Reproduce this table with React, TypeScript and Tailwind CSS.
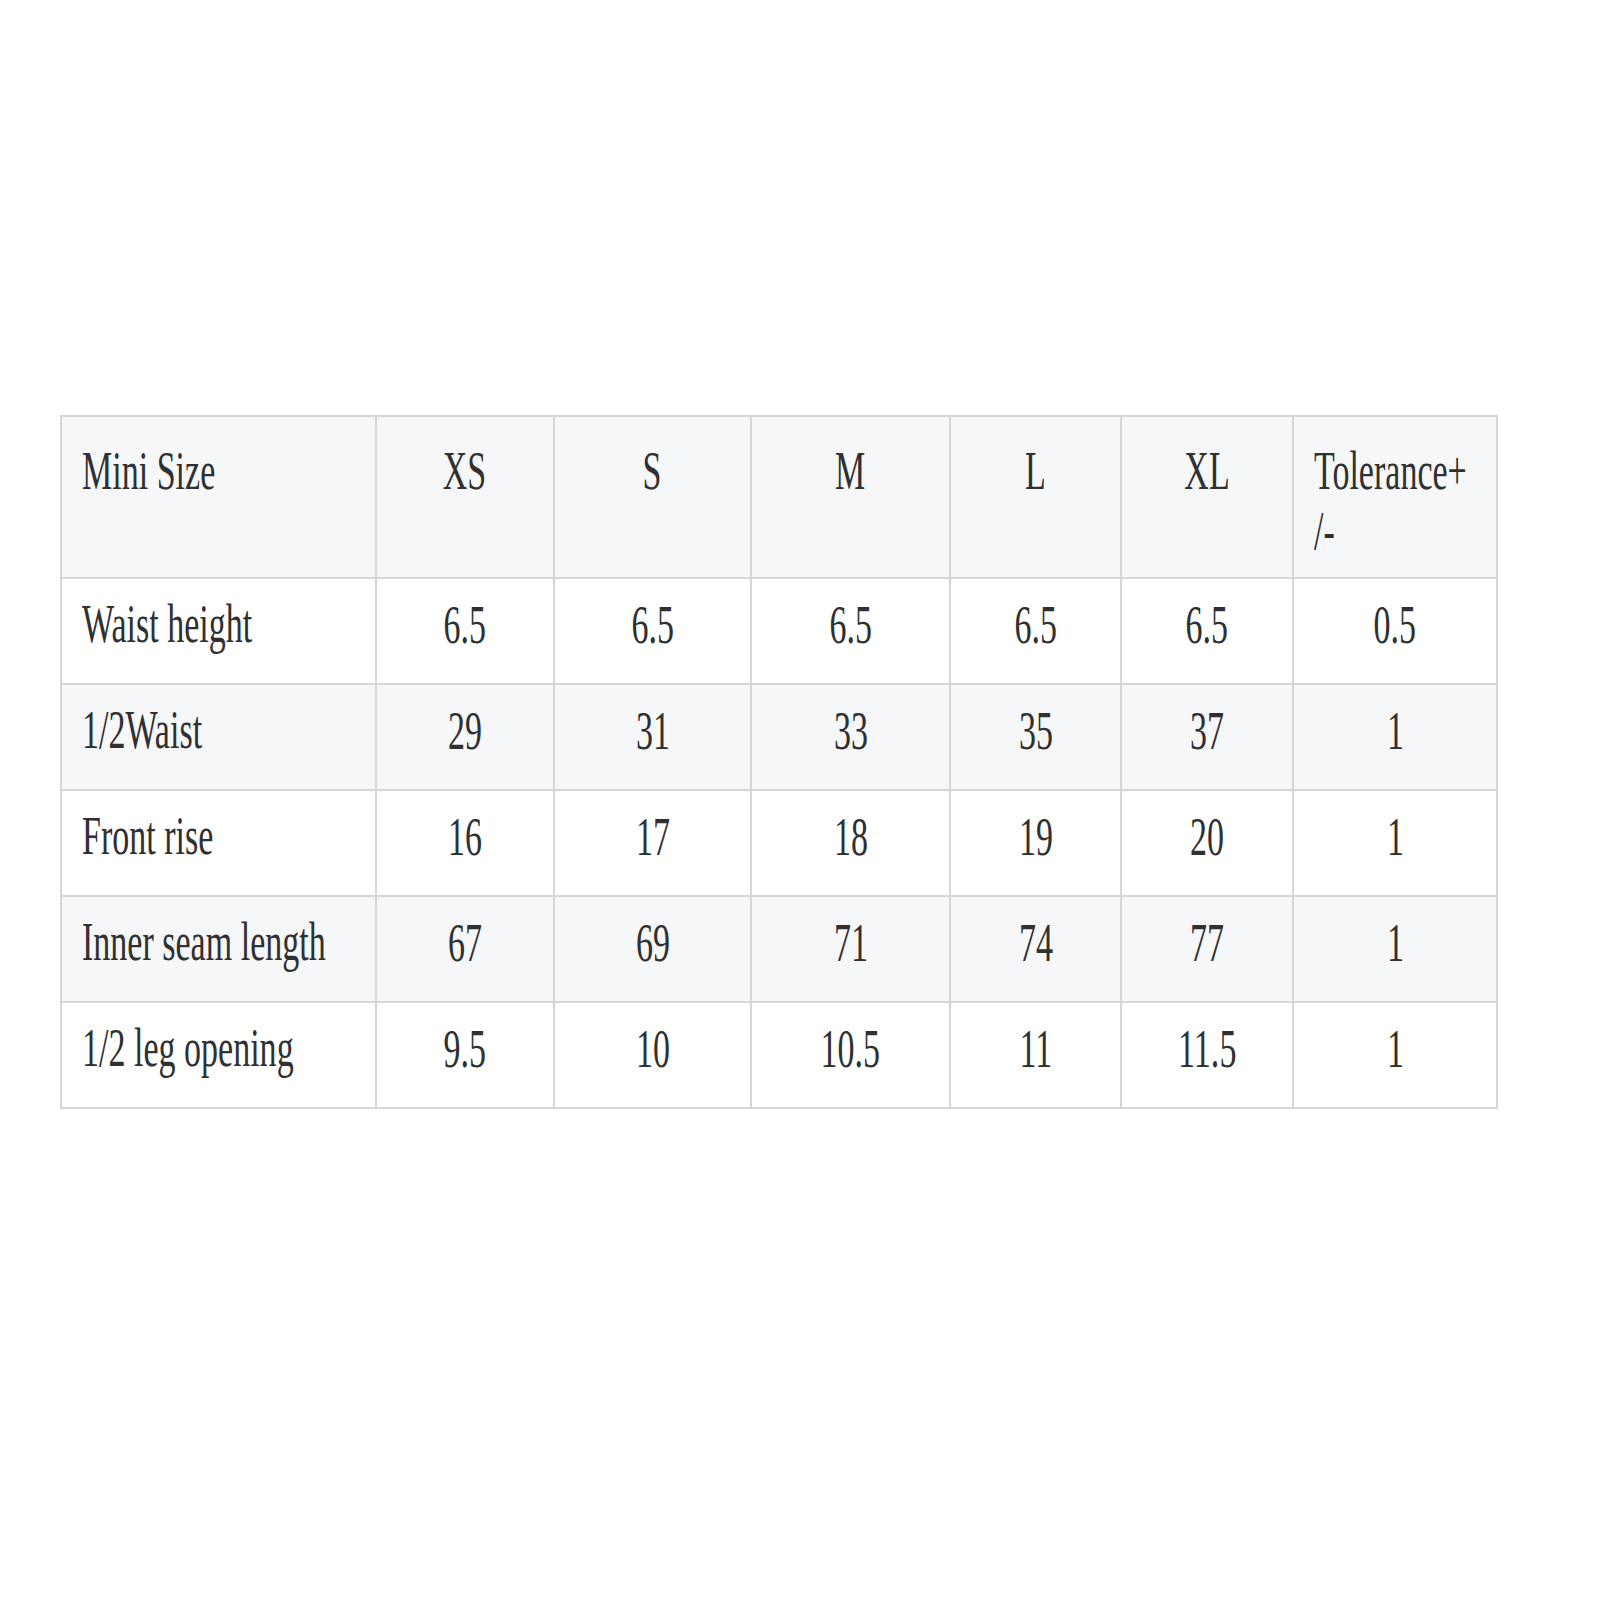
const sizes = ["XS", "S", "M", "L", "XL"];

const rows: { label: string; values: string[]; tol: string }[] = [
  { label: "Waist height", values: ["6.5", "6.5", "6.5", "6.5", "6.5"], tol: "0.5" },
  { label: "1/2Waist", values: ["29", "31", "33", "35", "37"], tol: "1" },
  { label: "Front rise", values: ["16", "17", "18", "19", "20"], tol: "1" },
  { label: "Inner seam length", values: ["67", "69", "71", "74", "77"], tol: "1" },
  { label: "1/2 leg opening", values: ["9.5", "10", "10.5", "11", "11.5"], tol: "1" },
];

function Squeezed({ children, left }: { children: React.ReactNode; left?: boolean }) {
  return (
    <span
      className={
        "inline-block whitespace-nowrap scale-x-[0.63] " + (left ? "origin-left" : "origin-center")
      }
    >
      {children}
    </span>
  );
}

export default function App() {
  return (
    <div
      className="w-[1600px] h-[1600px] bg-white pt-[415px] pl-[60px] text-[#303030] text-[54px] leading-[60px]"
      style={{ fontFamily: '"Liberation Serif", "Times New Roman", serif' }}
    >
      <table className="w-[1436px] table-fixed border-collapse border-2 border-[#d6d6d6]">
        <colgroup>
          <col className="w-[315px]" />
          <col className="w-[178px]" />
          <col className="w-[197px]" />
          <col className="w-[199px]" />
          <col className="w-[171px]" />
          <col className="w-[172px]" />
          <col className="w-[204px]" />
        </colgroup>
        <thead>
          <tr className="h-[162px] bg-[#f6f7f8]">
            <th className="border-2 border-[#d6d6d6] align-top text-left font-normal pl-[20px] pt-[24px]">
              <Squeezed left>Mini Size</Squeezed>
            </th>
            {sizes.map((s) => (
              <th key={s} className="border-2 border-[#d6d6d6] align-top text-center font-normal pt-[24px]">
                <Squeezed>{s}</Squeezed>
              </th>
            ))}
            <th className="border-2 border-[#d6d6d6] align-top text-left font-normal pl-[20px] pt-[24px]">
              <Squeezed left>Tolerance+</Squeezed>
              <br />
              <Squeezed left>/-</Squeezed>
            </th>
          </tr>
        </thead>
        <tbody>
          {rows.map((r, i) => (
            <tr key={r.label} className={"h-[106px] " + (i % 2 === 1 ? "bg-[#f6f7f8]" : "bg-white")}>
              <td className="border-2 border-[#d6d6d6] text-left pl-[20px] pb-[14px]">
                <Squeezed left>{r.label}</Squeezed>
              </td>
              {r.values.map((v, j) => (
                <td key={j} className="border-2 border-[#d6d6d6] text-center pb-[12px]">
                  <Squeezed>{v}</Squeezed>
                </td>
              ))}
              <td className="border-2 border-[#d6d6d6] text-center pb-[12px]">
                <Squeezed>{r.tol}</Squeezed>
              </td>
            </tr>
          ))}
        </tbody>
      </table>
    </div>
  );
}
